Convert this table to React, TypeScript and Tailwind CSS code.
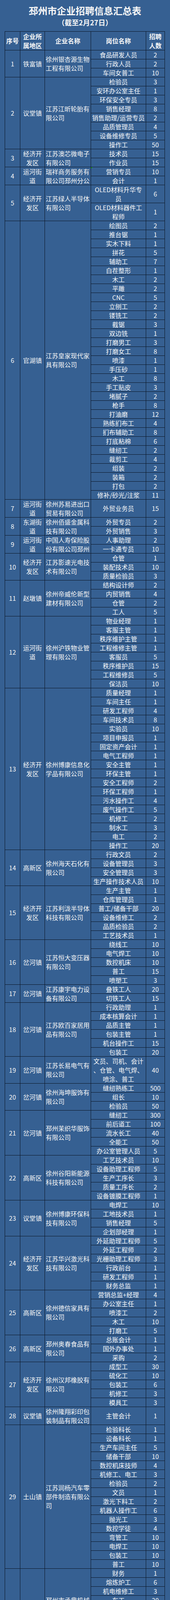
type Job = [string | string[], number, number?];

interface Company {
  no: number;
  region: string;
  name: string | string[];
  jobs: Job[];
}

const companies: Company[] = [
  { no: 1, region: '铁富镇', name: '徐州银杏源生物工程有限公司', jobs: [['食品研发人员', 2], ['行政人员', 2], ['车间女普工', 10]] },
  {
    no: 2, region: '议堂镇', name: '江苏江昕轮胎有限公司',
    jobs: [['检验员', 3], ['安环办公室主任', 1], ['环保安全专员', 3], ['销售经理', 8], ['销售助理/运营专员', 2], ['品质管理员', 4], ['设备维修专员', 5], ['操作工', 50]],
  },
  { no: 3, region: '经济开发区', name: '江苏澳芯微电子有限公司', jobs: [['技术员', 15], ['作业员', 15]] },
  { no: 4, region: '运河街道', name: ['瑞祥商务服务有', '限公司邳州分公'], jobs: [['营销专员', 10], ['会计', 1]] },
  {
    no: 5, region: '经济开发区', name: '江苏绿人半导体有限公司',
    jobs: [[['OLED材料升华专', '员'], 6, 2], [['OLED材料器件工', '程师'], 1, 2]],
  },
  {
    no: 6, region: '官湖镇', name: '江苏皇家现代家具有限公司',
    jobs: [
      ['绘图员', 2], ['推台锯', 1], ['实木下料', 1], ['拼花', 5], ['辅助工', 7], ['白茬整形', 1], ['木工', 2], ['平雕', 2],
      ['CNC', 5], ['立刨工', 2], ['镂铣工', 2], ['截锯', 3], ['双边铣', 1], ['打磨男工', 3], ['打磨女工', 8], ['喷漆', 1],
      ['手压砂', 1], ['木工', 8], ['手工贴皮', 3], ['堵腻子', 2], ['枪手', 8], ['打油磨', 12], ['熟练扪布工', 4], ['扪布辅助工', 8],
      ['打底粘棉', 6], ['缝纫工', 2], ['裁剪工', 4], ['组装', 2], ['装箱', 2], ['打包', 2], ['修补/砂光/注浆', 11],
    ],
  },
  { no: 7, region: '运河街道', name: '徐州苏易进出口贸易有限公司', jobs: [['外贸业务员', 15, 2]] },
  { no: 8, region: '东湖街道', name: '徐州佰盛金属科技有限公司', jobs: [['外贸专员', 2], ['外贸销售', 3]] },
  { no: 9, region: '运河街道', name: ['中国人寿保险股', '份有限公司邳州'], jobs: [['人事助理', 2], ['一卡通专员', 10]] },
  { no: 10, region: '经济开发区', name: '江苏影速光电技术有限公司', jobs: [['仓管', 1], ['装配技术员', 10], ['质量检验员', 3]] },
  { no: 11, region: '赵墩镇', name: '徐州帝威伦新型建材有限公司', jobs: [['结构设计师', 2], ['内贸销售', 4], ['仓管', 2], ['工人', 5]] },
  {
    no: 12, region: '运河街道', name: '徐州沪铁物业管理有限公司',
    jobs: [['物业经理', 1], ['客服主管', 1], ['秩序维护主管', 1], ['工程维修主管', 1], ['客服员', 5], ['秩序维护员', 15], ['工程维修员', 5], ['保洁员', 10]],
  },
  {
    no: 13, region: '经济开发区', name: '徐州博康信息化学品有限公司',
    jobs: [
      ['质量经理', 1], ['车间主任', 1], ['研发工程师', 4], ['车间技术员', 8], ['实验员', 10], ['项目申报员', 1],
      ['固定资产会计', 1], ['电气工程师', 1], ['安全主管', 1], ['环保主管', 1], ['安全工程师', 2], ['环保工程师', 1],
      ['污水操作工', 4], ['废气操作工', 5], ['机修工', 2], ['制水工', 3], ['电工', 2], ['操作工', 20],
    ],
  },
  { no: 14, region: '高新区', name: '徐州海天石化有限公司', jobs: [['行政文员', 2], ['设备管理员', 3], ['安全管理员', 3], ['生产操作技术人员', 10]] },
  {
    no: 15, region: '经济开发区', name: '江苏利泷半导体科技有限公司',
    jobs: [['生产主管', 1], ['仓库管理员', 1], ['普工/储备干部', 20], ['设备维修工', 2], ['品质检验员', 2], ['工艺技术员', 1]],
  },
  { no: 16, region: '岔河镇', name: '江苏恒大变压器有限公司', jobs: [['绕线工', 10], ['电气焊工', 10], ['数控机床', 10], ['普工', 15], ['喷塑工', 3]] },
  { no: 17, region: '岔河镇', name: '江苏康宇电力设备有限公司', jobs: [['叠铁工人', 20], ['切铁工人', 15]] },
  {
    no: 18, region: '岔河镇', name: '江苏欧百家居用品有限公司',
    jobs: [['行政助理', 1], ['成本核算会计', 1], ['品质主管', 1], ['包装主管', 1], ['机台操作工', 15], ['包装工', 20]],
  },
  { no: 19, region: '岔河镇', name: '江苏长易电气有限公司', jobs: [[['文员、司机、会计', '、仓管、电气焊、', '喷涂、普工'], 40, 3]] },
  { no: 20, region: '岔河镇', name: '徐州海坤服饰有限公司', jobs: [['缝纫熟练工', 500], ['组长', 10], ['检验员', 50]] },
  { no: 21, region: '岔河镇', name: '邳州茉织华服饰有限公司', jobs: [['缝纫工', 300], ['前后道工', 100], ['流水长工', 40], ['全能工', 50], ['办公室管理人员', 5]] },
  {
    no: 22, region: '高新区', name: '徐州谷阳新能源科技有限公司',
    jobs: [['工艺技术员', 10], ['设备助理工程师', 5], ['生产工序长', 3], ['质量工序长', 2], ['设备镀膜工程师', 1]],
  },
  { no: 23, region: '议堂镇', name: '徐州博康环保科技有限公司', jobs: [['电焊工', 10], ['工地技术员', 1], ['销售经理', 5], ['企划部经理', 1]] },
  {
    no: 24, region: '经济开发区', name: '江苏华兴激光科技有限公司',
    jobs: [['外延助理工程师', 5], ['外延工程师', 2], ['光栅助理工程师', 3], ['行政前台', 1], ['研发工程师', 1], ['财务总监', 1]],
  },
  { no: 25, region: '高新区', name: '徐州德信家具有限公司', jobs: [['营销总监+经理', 4], ['办公室主任', 1], ['喷漆工', 2], ['木工', 10], ['打磨工', 5]] },
  { no: 26, region: '高新区', name: '邳州奥春食品有限公司', jobs: [['总账会计', 1], ['国外办事处', 1], ['采购', 2]] },
  { no: 27, region: '经济开发区', name: '徐州汉邦橡胶有限公司', jobs: [['成型工', 30], ['硫化工', 10], ['包装工', 6], ['机修工', 3], ['模具工', 3]] },
  { no: 28, region: '议堂镇', name: '徐州隆翔彩印包装制品有限公司', jobs: [['主管会计', 1, 2]] },
  {
    no: 29, region: '土山镇', name: '江苏润杨汽车零部件制造有限公司',
    jobs: [
      ['检验科长', 1], ['设备科长', 1], ['生产车间主任', 5], ['储备干部', 10], ['数控机床技师', 4], ['机修工、电工', 3],
      ['检验员', 2], ['文员', 1], ['激光下料工', 2], ['机器人操作工', 6], ['抛光工', 3], ['数控学徒', 4],
      ['弯管工', 10], ['电焊工', 10], ['包装工', 10], ['普工', 10],
    ],
  },
  {
    no: 30, region: '土山镇', name: '邳州市承鼎机械设备有限公司',
    jobs: [['财务', 1], ['熔炼炉工', 6], ['机电维修工', 3], ['车工', 20], ['钻床工', 5], ['数控车床操作工', 16], ['制齿工', 2], ['检验员', 1]],
  },
  { no: 31, region: '土山镇', name: '徐州大利精创传动机械有限公司', jobs: [['数控工', 3], ['普通车工', 3], ['插齿工', 2], ['装配工', 10], ['技术员', 2]] },
  {
    no: 32, region: '土山镇', name: '徐州瑞欧达机械科技有限公司',
    jobs: [
      ['数控火焰切割', 4], ['打 磨 工', 3], ['焊   工', 5], ['镗 床 工', 1], ['机加工中心', 3],
      ['设备维修人员', 1], ['安全管理员', 1], ['涂装喷漆员', 2], ['整机找补员', 2], ['涂装质检员', 1],
    ],
  },
  { no: 33, region: '土山镇', name: '徐州博科工程机械有限公司', jobs: [['营销经理', 2], ['生产调度', 1], ['技术员', 2], ['质检员', 2], ['下料工', 2], ['普工', 1]] },
  { no: 34, region: '土山镇', name: '徐州科聚利鑫机械设备制造有限公司', jobs: [['仓库管理员', 1], ['会计', 1], ['生产主管', 1], ['普工', 10]] },
  {
    no: 35, region: '土山镇', name: '徐州兰贵机械科技有限公司',
    jobs: [
      ['检验科长', 1], ['生产车间主任', 2], ['数控机床技师', 4], ['机修工、电工', 2], ['文员', 1], ['激光下料工', 2],
      ['检验员', 2], ['文员', 1], ['激光下料工', 2], ['抛光工', 2], ['数控学徒', 4], ['包装工', 10],
      ['弯管工', 10], ['电焊工', 10], ['包装工', 10], ['普工', 10],
    ],
  },
  {
    no: 36, region: '土山镇', name: '徐州北方泵业有限公司',
    jobs: [['数控车床操作工', 10], ['激光切割操作工', 2], ['数控折弯机操作工', 2], ['电焊工', 5], ['钻床操作工', 5], ['组装工', 10]],
  },
  { no: 37, region: '土山镇', name: ['徐州达尔特机械', '设备制造有限公'], jobs: [['普工（男）', 20], ['数控车工男性', 10]] },
  { no: 38, region: '土山镇', name: '徐州天辰货架制造有限公司', jobs: [['仓库管理员', 1], ['出纳', 1], ['普工', 15], ['冷弯型钢工', 2], ['二氧保护焊工', 10]] },
  { no: 39, region: '土山镇', name: '江苏睿祥电力设备有限公司', jobs: [['财务', 1], ['激光下料工', 2], ['折弯工', 2], ['普工', 20]] },
  { no: 40, region: '土山镇', name: '江苏久联新能源科技有限公司', jobs: [['常务副经理', 1], ['办公室主管', 1], ['装配电工', 5], ['装配钳工', 5]] },
];

// cells that carry the little green spreadsheet warning flag: "company-jobIndex"
const flagged = new Set(['4-0', '32-1', '33-3', '33-4', '35-3', '35-4', '35-10']);

// job rows take 1, 2 or 3 sheet rows of 23px
const rowSpan: Record<number, string> = {
  1: 'row-span-1',
  2: 'row-span-2',
  3: 'row-span-3',
};

const cell = 'border-r border-b border-[#0b1626] overflow-hidden min-w-0 min-h-0';

function CompanyBlock({ company }: { company: Company }) {
  const total = company.jobs.reduce((sum, job) => sum + (job[2] ?? 1), 0);
  const span = { gridRow: `span ${total} / span ${total}` };

  return (
    <div className="grid grid-cols-[39px_63px_118px_141px_48px] auto-rows-[23px]">
      <div style={span} className={`${cell} flex items-center justify-center`}>
        {company.no}
      </div>
      <div style={span} className={`${cell} flex items-center justify-center text-center`}>
        {company.region}
      </div>
      <div style={span} className={`${cell} flex flex-col justify-center pl-[2px]`}>
        {Array.isArray(company.name) ? (
          company.name.map((line, i) => (
            <div key={i} className="whitespace-nowrap overflow-hidden shrink-0">
              {line}
            </div>
          ))
        ) : (
          <div className="shrink-0">{company.name}</div>
        )}
      </div>
      {company.jobs.map(([title, count, units = 1], i) => {
        const lines = Array.isArray(title) ? title : [title];
        return [
          <div
            key={`t${i}`}
            className={`${cell} ${rowSpan[units]} relative flex flex-col items-center justify-center text-center`}
          >
            {flagged.has(`${company.no}-${i}`) && (
              <span className="absolute left-0 top-0 w-0 h-0 border-t-[4px] border-r-[4px] border-t-[#21a121] border-r-transparent" />
            )}
            {lines.map((line, k) => (
              <div key={k} className="whitespace-pre shrink-0">
                {line}
              </div>
            ))}
          </div>,
          <div key={`n${i}`} className={`${cell} ${rowSpan[units]} flex items-center justify-center`}>
            {count}
          </div>,
        ];
      })}
    </div>
  );
}

export default function App() {
  return (
    <div className="w-full bg-[#366092] text-[#f7f7f7] font-['Noto_Sans_CJK_SC','Microsoft_YaHei',sans-serif]">
      <div className="h-[80px] flex flex-col items-center pt-[12px] font-bold">
        <div className="text-[24px] leading-[30px]">邳州市企业招聘信息汇总表</div>
        <div className="text-[18px] leading-[24px] mt-[3px]">（截至2月27日）</div>
      </div>

      <div className="ml-[12px] w-[410px] border-l border-t border-[#0b1626] text-[16px] leading-[23px]">
        <div className="grid grid-cols-[39px_63px_118px_141px_48px] grid-rows-[48px] font-bold">
          <div className={`${cell} flex items-center justify-center`}>序号</div>
          <div className={`${cell} flex items-center justify-center text-center`}>企业所属地区</div>
          <div className={`${cell} flex items-center justify-center`}>企业名称</div>
          <div className={`${cell} flex items-center justify-center`}>岗位名称</div>
          <div className={`${cell} flex items-center justify-center text-center`}>招聘人数</div>
        </div>

        {companies.map((company) => (
          <CompanyBlock key={company.no} company={company} />
        ))}
      </div>
    </div>
  );
}
